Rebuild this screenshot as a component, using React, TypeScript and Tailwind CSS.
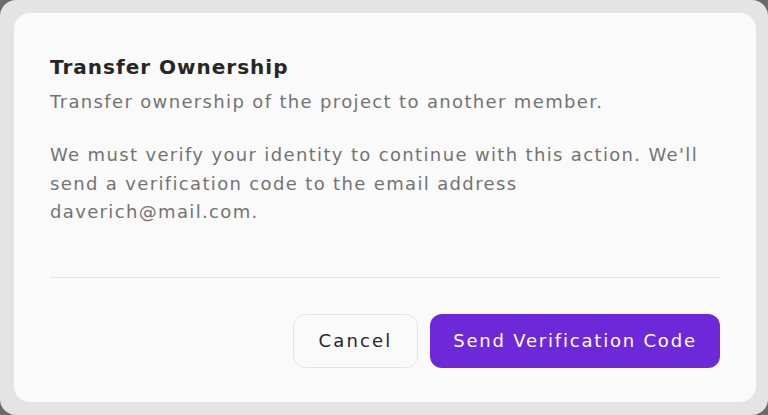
export default function App() {
  return (
    <div className="w-[768px] h-[415px] bg-[#6b6b6b]">
      <div className="w-full h-full rounded-[16px] bg-[#e4e4e4] pl-[14px] pr-[12px] pt-[13px] pb-[13px] font-['DejaVu_Sans',sans-serif]">
        <div className="h-full rounded-[16px] bg-[#fafafa] px-[36px] pt-[40px]">
          <h2 className="text-[20px] leading-[28px] font-semibold tracking-[0.05em] text-[#262626]">Transfer Ownership</h2>
          <p className="mt-[7px] text-[18px] leading-[28px] tracking-[0.075em] text-[#737373]">
            Transfer ownership of the project to another member.
          </p>
          <p className="mt-[25px] text-[18px] leading-[28.5px] tracking-[0.075em] text-[#737373]">
            We must verify your identity to continue with this action. We'll send a verification code to the email address daverich@mail.com.
          </p>
          <div className="mt-[50px] h-px bg-[#e5e5e5]" />
          <div className="mt-[36px] flex justify-end gap-[12px]">
            <button className="h-[54px] w-[125px] rounded-[12px] border border-[#e5e5e5] bg-[#fafafa] text-[18px] font-medium tracking-[0.12em] text-[#262626]">
              Cancel
            </button>
            <button className="h-[54px] w-[290px] rounded-[12px] bg-[#6d28d9] text-[18px] font-medium tracking-[0.1em] text-white">
              Send Verification Code
            </button>
          </div>
        </div>
      </div>
    </div>
  );
}
